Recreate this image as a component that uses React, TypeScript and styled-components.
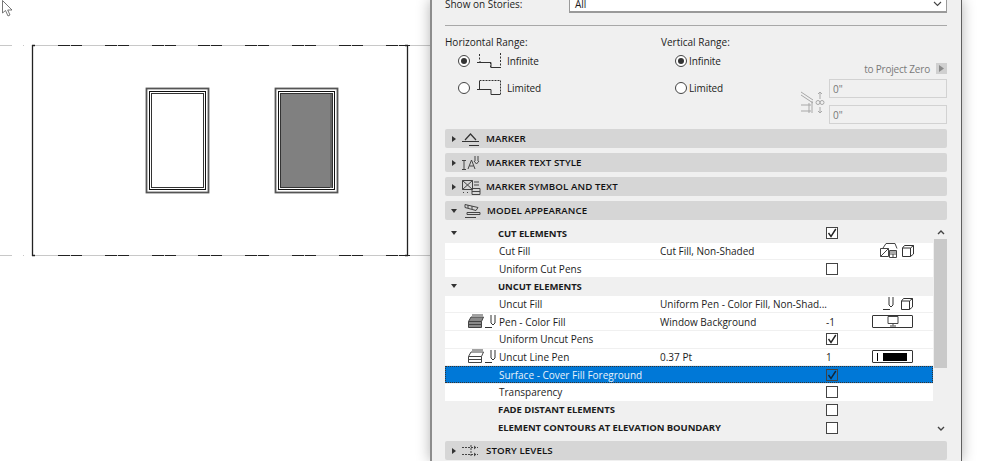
import React from 'react';
import styled, { createGlobalStyle } from 'styled-components';

const Global = createGlobalStyle`
  html, body { margin: 0; padding: 0; background: #fff; }
  body { font-family: "Open Sans", "Noto Sans", sans-serif; font-size: 10px; color: #1c1c1c; }
`;
const Page = styled.div`display:flex;width:999px;height:461px;overflow:hidden;background:#fff;`;
const Canvas = styled.div`width:430px;height:461px;flex:none;`;
const Panel = styled.div`width:528px;height:461px;flex:none;box-sizing:content-box;background:#f0f0f0;border-left:2px solid #8c8c8c;border-right:1px solid #5f5f5f;padding:0 1px 0 0;box-shadow:0 0 13px rgba(0,0,0,.3);display:flex;flex-direction:column;`;
const Inner = styled.div`margin:0 13px;display:flex;flex-direction:column;flex:1;min-width:0;`;
const StoryRow = styled.div`display:flex;align-items:center;height:20px;margin-top:-6px;flex:none;`;
const StoryLabel = styled.span`width:124px;font-size:10px;`;
const Select = styled.div`flex:1;height:18px;box-sizing:border-box;background:#fff;border:1px solid #9a9a9a;border-bottom-width:2px;display:flex;align-items:center;justify-content:space-between;padding:0 4px 0 5px;font-size:10px;`;
const Rule = styled.div`height:1px;background:#a8a8a8;flex:none;margin-top:${p=>p.$top}px;`;
const Range = styled.div`display:grid;grid-template-columns:216px 132px 1fr;height:103px;flex:none;padding-top:9px;box-sizing:border-box;`;
const RangeCol = styled.div`display:flex;flex-direction:column;`;
const RangeLabel = styled.div`height:14px;line-height:14px;font-size:10px;margin-bottom:2px;`;
const Option = styled.div`display:flex;align-items:center;height:20px;margin-bottom:7px;padding-left:${p=>p.$indent}px;font-size:10px;letter-spacing:-.1px;`;
const Radio = styled.span`width:12px;height:12px;box-sizing:border-box;border-radius:50%;border:1px solid #444;background:#fff;display:flex;align-items:center;justify-content:center;flex:none;margin-right:${p=>p.$gap}px;&::after{content:"";width:6px;height:6px;border-radius:50%;background:${p=>p.$on?'#333':'transparent'};}`;
const RangeIcon = styled.svg`width:26px;height:18px;margin-right:5px;flex:none;`;
const ZeroCol = styled.div`display:flex;flex-direction:column;align-items:flex-end;padding-top:28px;`;
const ZeroRow = styled.div`display:flex;align-items:center;height:11px;color:#7a7a7a;font-size:10px;letter-spacing:-.2px;gap:6px;margin-bottom:5px;`;
const ZeroBtn = styled.span`width:11px;height:11px;background:#d0d0d0;display:flex;align-items:center;justify-content:center;`;
const ZeroBody = styled.div`display:flex;align-items:center;gap:4px;`;
const ZeroInputs = styled.div`display:flex;flex-direction:column;gap:7px;`;
const ZeroInput = styled.div`width:118px;height:19px;box-sizing:border-box;border:1px solid #d2d2d2;display:flex;align-items:center;padding-left:3px;color:#777;font-size:10px;`;
const Section = styled.div`height:19px;margin-bottom:5px;flex:none;background:#d6d6d6;border-radius:2px;display:flex;align-items:center;font-weight:600;font-size:9.7px;letter-spacing:.1px;color:#111;`;
const Arrow = styled.span`width:0;height:0;flex:none;margin-left:${p=>p.$left}px;${p=>p.$open?'border-left:3.5px solid transparent;border-right:3.5px solid transparent;border-top:4px solid #333;':'border-top:3.5px solid transparent;border-bottom:3.5px solid transparent;border-left:4px solid #333;'}`;
const SecIcon = styled.svg`width:20px;height:16px;margin:0 5px 0 ${p=>p.$gap}px;flex:none;`;
const ListWrap = styled.div`display:flex;height:211px;margin:0 0 5px;flex:none;`;
const List = styled.div`width:488px;display:grid;grid-auto-rows:1fr;gap:1px;flex:none;`;
const Row = styled.div`display:grid;grid-template-columns:54px 161px 166px 47px 60px;align-items:center;font-size:10px;background:${p=>p.$sel?'#0078d7':p.$head?'#f0f0f0':'#fff'};color:${p=>p.$sel?'#e8f2fb':'#1c1c1c'};${p=>p.$sel?'outline:1px dotted #333;outline-offset:-1px;':''}`;
const Lead = styled.div`display:flex;align-items:center;justify-content:${p=>p.$end?'flex-end':'flex-start'};padding-right:${p=>p.$end?'2px':'0'};height:100%;`;
const Name = styled.div`white-space:nowrap;${p=>p.$bold?'font-weight:700;font-size:9.5px;letter-spacing:-.08px;margin-left:-1px;':''}${p=>p.$wide?'grid-column:span 2;':''}`;
const Value = styled.div`white-space:nowrap;`;
const Ctrl = styled.div`display:flex;align-items:center;`;
const Check = styled.span`width:12px;height:12px;box-sizing:border-box;border:1px solid #444;background:${p=>p.$sel?'transparent':'#fff'};display:flex;align-items:center;justify-content:center;`;
const Num = styled.span`font-size:10px;`;
const Tail = styled.div`display:flex;align-items:center;gap:${p=>p.$gap||3}px;padding-left:${p=>p.$pad||0}px;`;
const ColorBtn = styled.span`width:41px;height:13px;box-sizing:border-box;border:1px solid #333;border-radius:1px;background:#fff;display:flex;align-items:center;justify-content:center;gap:5px;margin-left:-1px;`;
const InkBar = styled.span`width:24px;height:8px;background:#000;`;
const InkTick = styled.span`width:1px;height:8px;background:#000;margin-left:-1px;`;
const Scroll = styled.div`width:13px;margin-left:1px;display:flex;flex-direction:column;align-items:center;flex:none;`;
const ScrollBtn = styled.div`height:14px;width:100%;display:flex;align-items:center;justify-content:center;flex:none;`;
const Thumb = styled.div`height:129px;width:100%;background:#c9c9c9;flex:none;`;
const ScrollFill = styled.div`flex:1;`;

const Chk = ({ sel }: { sel?: boolean }) => (
  <svg width="10" height="10" viewBox="0 0 10 10"><path d="M1.500 5 L4 8.500 L8.800 1" fill="none" stroke={sel ? '#12263a' : '#222'} strokeWidth="1.400" /></svg>
);
const Box = ({ on, sel }: { on?: boolean; sel?: boolean }) => <Check $sel={sel}>{on && <Chk sel={sel} />}</Check>;

const Pen = () => (
  <svg width="13" height="15" viewBox="0 0 13 15"><path d="M7 1v8l2 2 2-2V1M1 13.500h7" fill="none" stroke="#333" /></svg>
);
const Cube = () => (
  <svg width="12" height="12" viewBox="0 0 12 12"><path d="M.5 3h8v8.500H.5zM.5 3l2-2.500h9v8.500l-3 2.500M8.500 3l3-2.500" fill="none" stroke="#333" /></svg>
);
const CutIcon = () => (
  <svg width="18" height="15" viewBox="0 0 18 15"><path d="M.5 5.500h8v8h-8zM.5 13.500l8-8M9.500 7.500h7v7h-7zM9.500 11h7M13 7.500v7M3 5l3-4.500h9l2 5" fill="none" stroke="#444" /><rect x="10" y="8" width="6" height="3" fill="#aaa" /></svg>
);
const Layers = ({ dark }: { dark?: boolean }) => (
  <svg width="16" height="15" viewBox="0 0 16 15"><path d="M.5 7.500 3 3h12.500l-2 4.500M4 1h11M.5 7.500h13v6H.5zM.5 10.500h13" fill={dark ? '#8a8a8a' : 'none'} stroke="#444" /></svg>
);
const Monitor = () => (
  <svg width="12" height="11" viewBox="0 0 12 11"><path d="M1 .5h10v7H1zM6 7.500v2M3 10h6" fill="none" stroke="#444" /></svg>
);

const DRAW_X = [58, 105, 152, 198, 245, 292, 339, 386];
const Win = ({ x, fill }: { x: number; fill?: boolean }) => (
  <g fill="none">
    <rect x={x + 0.5} y="88.500" width="62" height="104" stroke="#555" strokeWidth="1.800" fill="#fff" />
    <rect x={x + 3.500} y="91.500" width="56" height="98" stroke="#111" />
    <rect x={x + 5.500} y="93.500" width="52" height="94" stroke="#333" fill={fill ? '#808080' : '#fff'} />
    {fill && <path d={`M${x + 56} 94v94`} stroke="#666" strokeWidth="2" />}
  </g>
);

const rows = [
  { head: true, open: true, name: 'CUT ELEMENTS', check: 'on' },
  { name: 'Cut Fill', value: 'Cut Fill, Non-Shaded', tail: <Tail $pad={7} $gap={4}><CutIcon /><Cube /></Tail> },
  { name: 'Uniform Cut Pens', check: 'off' },
  { head: true, open: true, name: 'UNCUT ELEMENTS' },
  { name: 'Uncut Fill', value: 'Uniform Pen - Color Fill, Non-Shad...', tail: <Tail $pad={9} $gap={6}><Pen /><Cube /></Tail> },
  { lead: <><Layers dark /><Pen /></>, name: 'Pen - Color Fill', value: 'Window Background', num: '-1', tail: <Tail><ColorBtn><Monitor /></ColorBtn></Tail> },
  { name: 'Uniform Uncut Pens', check: 'on' },
  { lead: <><Layers /><Pen /></>, name: 'Uncut Line Pen', value: '0.37 Pt', num: '1', tail: <Tail><ColorBtn><InkTick /><InkBar /></ColorBtn></Tail> },
  { sel: true, name: 'Surface - Cover Fill Foreground', check: 'on' },
  { name: 'Transparency', check: 'off' },
  { head: true, name: 'FADE DISTANT ELEMENTS', check: 'off' },
  { head: true, wide: true, name: 'ELEMENT CONTOURS AT ELEVATION BOUNDARY', check: 'off' },
] as any[];

export default function App() {
  return (
    <Page>
      <Global />
      <Canvas>
        <svg width="430" height="461" viewBox="0 0 430 461">
          {[45.500, 255.500].map((y) => (
            <g key={y}>
              <path d={`M0 ${y}H12M23 ${y}h1M32 ${y}H407M407 ${y}H430`} stroke="#c8c8c8" />
              {DRAW_X.map((x) => <path key={x} d={`M${x} ${y}h12M${x + 13} ${y}h11`} stroke="#222" />)}
            </g>
          ))}
          <path d="M32.500 45V256M407.500 45V256M32 45.500h3M405 45.500h3M32 255.500h3M405 255.500h3" stroke="#222" strokeWidth="1.300" fill="none" />
          <Win x={146} />
          <Win x={275} fill />
          <path d="M2.500.500V13l3-2.500 2.500 5.500 2-1-2.300-5H12L2.500.500z" fill="#fff" stroke="#555" strokeWidth=".8" />
        </svg>
      </Canvas>
      <Panel>
        <Inner>
          <StoryRow>
            <StoryLabel>Show on Stories:</StoryLabel>
            <Select>All<svg width="9" height="6" viewBox="0 0 9 6"><path d="M1 1l3.500 3.500L8 1" fill="none" stroke="#444" strokeWidth="1.100" /></svg></Select>
          </StoryRow>
          <Rule $top={11} />
          <Range>
            <RangeCol>
              <RangeLabel>Horizontal Range:</RangeLabel>
              <Option $indent={13}>
                <Radio $on $gap={6} />
                <RangeIcon viewBox="0 0 26 18"><path d="M3.500 2v7M24.500 1v15M1 10.500h10M15 15.500h9M14.500 10v6M3.500 9l1 1" fill="none" stroke="#333" strokeDasharray="2 1.500" /><path d="M2 10.500h13V15M15 15.500h9" fill="none" stroke="#333" /></RangeIcon>
                Infinite
              </Option>
              <Option $indent={13}>
                <Radio $gap={6} />
                <RangeIcon viewBox="0 0 26 18"><path d="M3.500 1.500h21v14" fill="none" stroke="#333" strokeDasharray="2 1" /><path d="M1 10.500h14V15.500h9M3.500 2v8" fill="none" stroke="#333" /></RangeIcon>
                Limited
              </Option>
            </RangeCol>
            <RangeCol>
              <RangeLabel>Vertical Range:</RangeLabel>
              <Option $indent={14}><Radio $on $gap={2} />Infinite</Option>
              <Option $indent={14}><Radio $gap={2} />Limited</Option>
            </RangeCol>
            <ZeroCol>
              <ZeroRow>to Project Zero<ZeroBtn><svg width="5" height="7" viewBox="0 0 5 7"><path d="M0 0l5 3.500L0 7z" fill="#8a8a8a" /></svg></ZeroBtn></ZeroRow>
              <ZeroBody>
                <svg width="25" height="26" viewBox="0 0 25 26"><path d="M1 3l12 8M1 6l12 8M1 16h10M1 22h10M9 14v10M12 12v12M20 3v7M18 5l2-2 2 2M20 18v6M18 22l2 2 2-2" fill="none" stroke="#a8a8a8" /><circle cx="18" cy="13.500" r="2" fill="none" stroke="#a8a8a8" /><circle cx="22" cy="13.500" r="2" fill="none" stroke="#a8a8a8" /></svg>
                <ZeroInputs>
                  <ZeroInput>0"</ZeroInput>
                  <ZeroInput>0"</ZeroInput>
                </ZeroInputs>
              </ZeroBody>
            </ZeroCol>
          </Range>
          <Section>
            <Arrow $left={7} />
            <SecIcon $gap={5} viewBox="0 0 20 16"><path d="M1 10.500h17M4 9l5.500-6L15 9M8 14.500h10" fill="none" stroke="#333" strokeWidth="1.200" /></SecIcon>
            MARKER
          </Section>
          <Section>
            <Arrow $left={7} />
            <SecIcon $gap={5} viewBox="0 0 20 16"><path d="M1 5.500h4M3 5.500v9M1 14.500h4M7 14l3.500-9 3.500 9M8.500 11h4M13 6l2.500 3L18 6M14 1v5M17 1v5" fill="none" stroke="#444" /></SecIcon>
            MARKER TEXT STYLE
          </Section>
          <Section>
            <Arrow $left={7} />
            <SecIcon $gap={5} viewBox="0 0 20 16"><path d="M1.500 1.500h10v9h-10zM1.500 1.500l10 9M11.500 1.500l-10 9M13 3h5M13 6h5M11 9.500h8v6h-8zM11 12.500h8M2 13.500h1M6 13.500h1" fill="none" stroke="#444" /></SecIcon>
            MARKER SYMBOL AND TEXT
          </Section>
          <Section>
            <Arrow $left={6} $open />
            <SecIcon $gap={5} viewBox="0 0 20 16"><path d="M3 1.500l13 3-2 3-11-3zM5 9.500h13v2H5zM3 14.500h11M6 2v3M10 3v3" fill="none" stroke="#444" /></SecIcon>
            MODEL APPEARANCE
          </Section>
          <ListWrap>
            <List>
              {rows.map((r) => (
                <Row key={r.name} $head={r.head} $sel={r.sel}>
                  {r.head && r.open ? <Lead><Arrow $left={6} $open /></Lead> : <Lead $end>{r.lead}</Lead>}
                  <Name $bold={r.head} $wide={r.wide}>{r.name}</Name>
                  {!r.wide && <Value>{r.value}</Value>}
                  <Ctrl>
                    {r.check && <Box on={r.check === 'on'} sel={r.sel} />}
                    {r.num && <Num>{r.num}</Num>}
                  </Ctrl>
                  {r.tail || <span />}
                </Row>
              ))}
            </List>
            <Scroll>
              <ScrollBtn><svg width="8" height="6" viewBox="0 0 8 6"><path d="M1 5l3-3 3 3" fill="none" stroke="#444" strokeWidth="1.400" /></svg></ScrollBtn>
              <Thumb />
              <ScrollFill />
              <ScrollBtn><svg width="8" height="6" viewBox="0 0 8 6"><path d="M1 1l3 3 3-3" fill="none" stroke="#444" strokeWidth="1.400" /></svg></ScrollBtn>
            </Scroll>
          </ListWrap>
          <Section>
            <Arrow $left={7} />
            <SecIcon $gap={5} viewBox="0 0 20 16"><path d="M1 4.500h16M1 11.500h16M10 2v12M13 3l2 1.500-2 1.500M13 10l2 1.500-2 1.500" fill="none" stroke="#444" strokeDasharray="2 1" /></SecIcon>
            STORY LEVELS
          </Section>
        </Inner>
      </Panel>
    </Page>
  );
}
